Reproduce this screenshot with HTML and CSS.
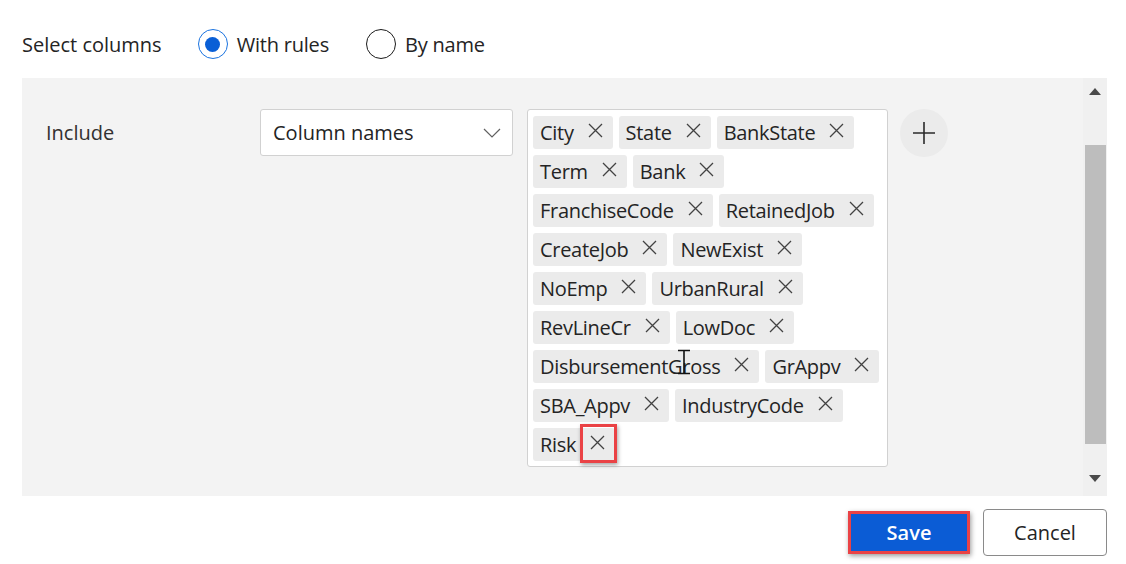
FILE: index.html
```html
<!DOCTYPE html>
<html lang="en">
<head>
<meta charset="utf-8">
<title>Select columns</title>
<link rel="stylesheet" href="styles.css">
</head>
<body>
<div class="page">
  <div class="mode-row">
    <span class="mode-label">Select columns</span>
    <label class="radio">
      <span class="radio-circle checked"><span class="radio-dot"></span></span>
      <span class="radio-text">With rules</span>
    </label>
    <label class="radio">
      <span class="radio-circle"></span>
      <span class="radio-text">By name</span>
    </label>
  </div>

  <div class="panel">
    <div class="panel-content">
      <div class="rule-row">
        <div class="rule-label">Include</div>
        <div class="dropdown">
          <span class="dropdown-text">Column names</span>
          <svg class="chevron" width="18" height="10" viewBox="0 0 18 10"><path d="M1 1 L9 9 L17 1" fill="none" stroke="#616161" stroke-width="1.2"/></svg>
        </div>
        <div class="tags-box">
          <div class="tags">
            <span class="tag"><span class="tag-text">City</span><span class="tag-x"><svg width="15" height="15" viewBox="0 0 15 15"><path d="M1 1 L14 14 M14 1 L1 14" stroke="#424242" stroke-width="1.3"/></svg></span></span>
            <span class="tag"><span class="tag-text">State</span><span class="tag-x"><svg width="15" height="15" viewBox="0 0 15 15"><path d="M1 1 L14 14 M14 1 L1 14" stroke="#424242" stroke-width="1.3"/></svg></span></span>
            <span class="tag"><span class="tag-text">BankState</span><span class="tag-x"><svg width="15" height="15" viewBox="0 0 15 15"><path d="M1 1 L14 14 M14 1 L1 14" stroke="#424242" stroke-width="1.3"/></svg></span></span>
            <span class="tag"><span class="tag-text">Term</span><span class="tag-x"><svg width="15" height="15" viewBox="0 0 15 15"><path d="M1 1 L14 14 M14 1 L1 14" stroke="#424242" stroke-width="1.3"/></svg></span></span>
            <span class="tag"><span class="tag-text">Bank</span><span class="tag-x"><svg width="15" height="15" viewBox="0 0 15 15"><path d="M1 1 L14 14 M14 1 L1 14" stroke="#424242" stroke-width="1.3"/></svg></span></span>
            <span class="tag"><span class="tag-text">FranchiseCode</span><span class="tag-x"><svg width="15" height="15" viewBox="0 0 15 15"><path d="M1 1 L14 14 M14 1 L1 14" stroke="#424242" stroke-width="1.3"/></svg></span></span>
            <span class="tag"><span class="tag-text">RetainedJob</span><span class="tag-x"><svg width="15" height="15" viewBox="0 0 15 15"><path d="M1 1 L14 14 M14 1 L1 14" stroke="#424242" stroke-width="1.3"/></svg></span></span>
            <span class="tag"><span class="tag-text">CreateJob</span><span class="tag-x"><svg width="15" height="15" viewBox="0 0 15 15"><path d="M1 1 L14 14 M14 1 L1 14" stroke="#424242" stroke-width="1.3"/></svg></span></span>
            <span class="tag"><span class="tag-text">NewExist</span><span class="tag-x"><svg width="15" height="15" viewBox="0 0 15 15"><path d="M1 1 L14 14 M14 1 L1 14" stroke="#424242" stroke-width="1.3"/></svg></span></span>
            <span class="tag"><span class="tag-text">NoEmp</span><span class="tag-x"><svg width="15" height="15" viewBox="0 0 15 15"><path d="M1 1 L14 14 M14 1 L1 14" stroke="#424242" stroke-width="1.3"/></svg></span></span>
            <span class="tag"><span class="tag-text">UrbanRural</span><span class="tag-x"><svg width="15" height="15" viewBox="0 0 15 15"><path d="M1 1 L14 14 M14 1 L1 14" stroke="#424242" stroke-width="1.3"/></svg></span></span>
            <span class="tag"><span class="tag-text">RevLineCr</span><span class="tag-x"><svg width="15" height="15" viewBox="0 0 15 15"><path d="M1 1 L14 14 M14 1 L1 14" stroke="#424242" stroke-width="1.3"/></svg></span></span>
            <span class="tag"><span class="tag-text">LowDoc</span><span class="tag-x"><svg width="15" height="15" viewBox="0 0 15 15"><path d="M1 1 L14 14 M14 1 L1 14" stroke="#424242" stroke-width="1.3"/></svg></span></span>
            <span class="tag"><span class="tag-text">DisbursementGross</span><span class="tag-x"><svg width="15" height="15" viewBox="0 0 15 15"><path d="M1 1 L14 14 M14 1 L1 14" stroke="#424242" stroke-width="1.3"/></svg></span></span>
            <span class="tag"><span class="tag-text">GrAppv</span><span class="tag-x"><svg width="15" height="15" viewBox="0 0 15 15"><path d="M1 1 L14 14 M14 1 L1 14" stroke="#424242" stroke-width="1.3"/></svg></span></span>
            <span class="tag"><span class="tag-text">SBA_Appv</span><span class="tag-x"><svg width="15" height="15" viewBox="0 0 15 15"><path d="M1 1 L14 14 M14 1 L1 14" stroke="#424242" stroke-width="1.3"/></svg></span></span>
            <span class="tag"><span class="tag-text">IndustryCode</span><span class="tag-x"><svg width="15" height="15" viewBox="0 0 15 15"><path d="M1 1 L14 14 M14 1 L1 14" stroke="#424242" stroke-width="1.3"/></svg></span></span>
            <span class="tag"><span class="tag-text">Risk</span><span class="tag-x highlighted"><svg width="15" height="15" viewBox="0 0 15 15"><path d="M1 1 L14 14 M14 1 L1 14" stroke="#424242" stroke-width="1.3"/></svg></span></span>
          </div>
          <svg class="ibeam" width="16" height="26" viewBox="0 0 16 26"><path d="M2 1.5 H14 M8 1.5 V24.5 M2 24.5 H14" fill="none" stroke="#111" stroke-width="1.6"/></svg>
        </div>
        <button class="add-btn" aria-label="Add"><svg width="24" height="24" viewBox="0 0 24 24"><path d="M12 1 V23 M1 12 H23" stroke="#2b2b2b" stroke-width="1.6"/></svg></button>
      </div>
    </div>
    <div class="scrollbar">
      <div class="scroll-arrow up"><svg width="12" height="7" viewBox="0 0 12 7"><path d="M6 0 L12 7 L0 7 Z" fill="#4a4a4a"/></svg></div>
      <div class="scroll-track"><div class="scroll-thumb"></div></div>
      <div class="scroll-arrow down"><svg width="12" height="7" viewBox="0 0 12 7"><path d="M0 0 L12 0 L6 7 Z" fill="#4a4a4a"/></svg></div>
    </div>
  </div>

  <div class="actions">
    <button class="btn btn-primary">Save</button>
    <button class="btn btn-secondary">Cancel</button>
  </div>
</div>
</body>
</html>
```

FILE: styles.css
```css
* { box-sizing: border-box; }

html, body {
  margin: 0;
  padding: 0;
  background: #ffffff;
}

body {
  font-family: "Open Sans", "Noto Sans", "Liberation Sans", sans-serif;
  color: #242424;
  font-size: 20px;
}

.page {
  width: 1126px;
  height: 564px;
  padding: 29px 19px 0 22px;
}

.mode-row {
  display: flex;
  align-items: center;
  height: 30px;
}

.mode-label {
  margin-right: 36px;
  color: #242424;
}

.radio {
  display: flex;
  align-items: center;
  margin-right: 37px;
}

.radio-circle {
  width: 30px;
  height: 30px;
  border-radius: 50%;
  border: 1.5px solid #1b1b1b;
  display: flex;
  align-items: center;
  justify-content: center;
  margin-right: 9px;
}

.radio-circle.checked {
  border-color: #1a73e0;
}

.radio-dot {
  width: 15px;
  height: 15px;
  border-radius: 50%;
  background: #0a5fd6;
}

.radio-text {
  color: #242424;
  letter-spacing: -0.2px;
}

.panel {
  margin-top: 19px;
  height: 418px;
  background: #f3f3f3;
  display: flex;
}

.panel-content {
  flex: 1;
  padding: 31px 0 0 24px;
}

.rule-row {
  display: flex;
  align-items: flex-start;
}

.rule-label {
  width: 214px;
  height: 47px;
  display: flex;
  align-items: center;
  color: #323130;
}

.dropdown {
  width: 253px;
  height: 47px;
  background: #fff;
  border: 1px solid #d1d1d1;
  border-radius: 3px;
  display: flex;
  align-items: center;
  justify-content: space-between;
  padding: 0 11px 0 12px;
  margin-right: 14px;
}

.dropdown-text {
  color: #242424;
}

.tags-box {
  position: relative;
  width: 361px;
  background: #fff;
  border: 1px solid #d1d1d1;
  border-radius: 3px;
  padding: 6px 5px 5px 5px;
  margin-right: 12px;
}

.tags {
  display: flex;
  flex-wrap: wrap;
  gap: 6px 6px;
}

.tag {
  display: flex;
  align-items: center;
  height: 33px;
  background: #ebebeb;
  border-radius: 3px;
  padding-left: 7px;
  color: #242424;
}

.tag-text {
  line-height: 33px;
  letter-spacing: -0.3px;
}

.tag-x {
  position: relative;
  width: 39px;
  height: 33px;
  display: flex;
  align-items: center;
  padding: 0 10px 4px 14px;
}

.tag-x.highlighted::after {
  content: "";
  position: absolute;
  left: 4px;
  top: -4px;
  right: -2px;
  bottom: -2px;
  border: 3px solid #ea4245;
  box-shadow: 1px 2px 4px rgba(0, 0, 0, 0.35);
}

.ibeam {
  position: absolute;
  left: 148px;
  top: 239px;
}

.add-btn {
  width: 48px;
  height: 48px;
  border-radius: 50%;
  border: none;
  background: #ebebeb;
  display: flex;
  align-items: center;
  justify-content: center;
  padding: 0;
}

.scrollbar {
  width: 24px;
  background: #f0f0f0;
  display: flex;
  flex-direction: column;
  align-items: center;
}

.scroll-arrow {
  display: flex;
  align-items: flex-start;
  justify-content: center;
}

.scroll-arrow.up {
  height: 20px;
  padding-top: 10px;
}

.scroll-track {
  flex: 1;
  width: 100%;
  padding: 47px 1px 0 2px;
}

.scroll-thumb {
  height: 299px;
  background: #bdbdbd;
}

.scroll-arrow.down {
  height: 24px;
  padding-top: 3px;
}

.actions {
  display: flex;
  justify-content: flex-end;
  align-items: center;
  margin-top: 13px;
  gap: 13px;
}

.btn {
  font-family: "Open Sans", "Noto Sans", "Liberation Sans", sans-serif;
  font-size: 20px;
  border-radius: 4px;
  cursor: pointer;
}

.btn-primary {
  width: 122px;
  height: 43px;
  background: #0b5cd5;
  color: #fff;
  font-weight: 600;
  border: 3px solid #ea4245;
  border-radius: 0;
  box-shadow: 1px 2px 5px rgba(0, 0, 0, 0.4);
}

.btn-secondary {
  width: 124px;
  height: 47px;
  background: #fff;
  color: #242424;
  border: 1px solid #8a8a8a;
}
```
